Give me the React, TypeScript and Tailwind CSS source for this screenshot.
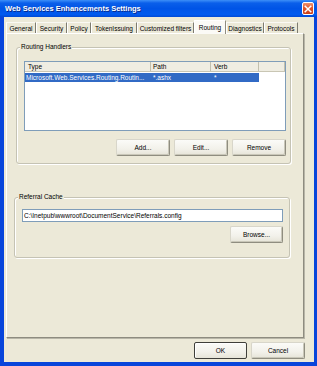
import React from "react";

const tabs = [
  { label: "General", cls: "w-[30px]" },
  { label: "Security", cls: "w-[31px]" },
  { label: "Policy", cls: "w-[24px]" },
  { label: "TokenIssuing", cls: "w-[46px]" },
  { label: "Customized filters", cls: "w-[57px]" },
  { label: "Routing", cls: "w-[32px]", active: true },
  { label: "Diagnostics", cls: "w-[38px]" },
  { label: "Protocols", cls: "w-[34px]" },
];

function Btn({ label, cls, def }: { label: string; cls: string; def?: boolean }) {
  return (
    <div
      className={
        "h-[17px] flex items-center justify-center rounded-[2px] bg-[linear-gradient(180deg,#FBFBF8_0%,#F2F1EA_60%,#E6E4D8_100%)] " +
        (def
          ? "border border-[#3F3F3A] shadow-[inset_1px_1px_0_#fff]"
          : "border border-t-[#D8D6CA] border-l-[#D8D6CA] border-r-[#8F8D80] border-b-[#8F8D80] shadow-[inset_-1px_-1px_0_#C9C7B9]") +
        " " +
        cls
      }
    >
      <span className="leading-[9px]">{label}</span>
    </div>
  );
}

export default function App() {
  return (
    <div className="w-[317px] h-[366px] bg-[#0845DB] flex flex-col font-['Liberation_Sans',Arial,sans-serif] text-[6.5px] text-black overflow-hidden">
      {/* Title bar */}
      <div className="h-[17px] flex items-center justify-between pl-[5px] pr-[3px] bg-[linear-gradient(180deg,#3D8FF8_0%,#0A5FEA_18%,#0054E6_50%,#005AEF_85%,#0049D4_100%)]">
        <span className="text-white font-bold text-[7.5px] leading-[10px] [text-shadow:1px_1px_0_#0A2A8A]">
          Web Services Enhancements Settings
        </span>
        <div className="w-[12px] h-[13px] rounded-[2px] border border-white bg-[linear-gradient(180deg,#F0926E_0%,#E2552A_45%,#C9401A_100%)] flex items-center justify-center">
          <svg width="8" height="8" viewBox="0 0 8 8">
            <path d="M1.2 1.2 L6.8 6.8 M6.8 1.2 L1.2 6.8" stroke="#fff" strokeWidth="1.5" strokeLinecap="square" />
          </svg>
        </div>
      </div>

      {/* Client area */}
      <div className="flex-1 ml-[4px] mr-[3px] mb-[4px] bg-[#ECE9D8] flex flex-col">
        {/* Tabs */}
        <div className="mt-[3px] ml-[2px] h-[13px] flex items-end">
          {tabs.map((t) =>
            t.active ? (
              <div
                key={t.label}
                className={
                  "relative z-10 -mb-[1px] h-[14px] flex items-center justify-center bg-[#FBFAF6] border-t border-l border-r border-t-white border-l-white border-r-[#8E8C80] " +
                  t.cls
                }
              >
                <span className="leading-[9px] -mt-[1px]">{t.label}</span>
              </div>
            ) : (
              <div
                key={t.label}
                className={
                  "h-[11px] flex items-center justify-center border-t border-l border-r border-t-[#FAF9F4] border-l-white border-r-[#7E7C70] " +
                  t.cls
                }
              >
                <span className="leading-[9px] whitespace-nowrap">{t.label}</span>
              </div>
            )
          )}
        </div>

        {/* Tab panel */}
        <div className="ml-[2px] w-[298px] h-[305px] border border-t-white border-l-white border-r-[#8E8C80] border-b-[#8E8C80] shadow-[1px_1px_0_#B8B6A8] bg-[#ECE9D8] flex flex-col">
          {/* Routing Handlers */}
          <div className="relative ml-[9px] mt-[13px] w-[275px] h-[117px] rounded-[3px] border border-[#C5C3B4] shadow-[inset_1px_1px_0_#fff,1px_1px_0_#fff] flex flex-col">
            <span className="absolute -top-[5px] left-[3px] px-[1px] bg-[#ECE9D8] leading-[8px]">Routing Handlers</span>

            {/* List view */}
            <div className="ml-[7px] mt-[13px] w-[262px] h-[70px] border border-[#7F9DB9] bg-white flex flex-col">
              <div className="h-[10px] flex bg-[#EFEDE2] border-b border-[#C9C6B4]">
                <div className="w-[126px] pl-[3px] border-r border-[#C2C0AE] leading-[9px]">Type</div>
                <div className="w-[60px] pl-[2px] border-r border-[#C2C0AE] leading-[9px]">Path</div>
                <div className="w-[48px] pl-[3px] border-r border-[#C2C0AE] leading-[9px]">Verb</div>
                <div className="w-[26px] border-r border-[#C2C0AE]"></div>
              </div>
              <div className="mt-[1px] h-[9px] w-[234px] flex bg-[#316AC5] text-white">
                <div className="w-[126px] pl-[1px] leading-[9px] whitespace-nowrap overflow-hidden">
                  Microsoft.Web.Services.Routing.Routin...
                </div>
                <div className="w-[60px] pl-[2px] leading-[9px]">*.ashx</div>
                <div className="w-[48px] pl-[3px] leading-[9px]">*</div>
              </div>
            </div>

            {/* Buttons */}
            <div className="mt-[8px] flex gap-[4px]">
              <Btn label="Add..." cls="ml-[99px] w-[54px]" />
              <Btn label="Edit..." cls="w-[54px]" />
              <Btn label="Remove" cls="w-[54px]" />
            </div>
          </div>

          {/* Referral Cache */}
          <div className="relative ml-[7px] mt-[33px] w-[276px] h-[61px] rounded-[3px] border border-[#C5C3B4] shadow-[inset_1px_1px_0_#fff,1px_1px_0_#fff] flex flex-col">
            <span className="absolute -top-[5px] left-[3px] px-[1px] bg-[#ECE9D8] leading-[8px]">Referral Cache</span>
            <div className="ml-[7px] mt-[11px] w-[261px] h-[13px] border border-[#7F9DB9] bg-white flex items-center pl-[1px]">
              <span className="leading-[9px] whitespace-nowrap">C:\Inetpub\wwwroot\DocumentService\Referrals.config</span>
            </div>
            <div className="mt-[4px] flex">
              <Btn label="Browse..." cls="ml-[215px] w-[53px]" />
            </div>
          </div>
        </div>

        {/* Dialog buttons */}
        <div className="mt-[4px] flex gap-[4px]">
          <Btn label="OK" cls="ml-[190px] w-[53px]" def />
          <Btn label="Cancel" cls="w-[54px]" />
        </div>
      </div>
    </div>
  );
}
